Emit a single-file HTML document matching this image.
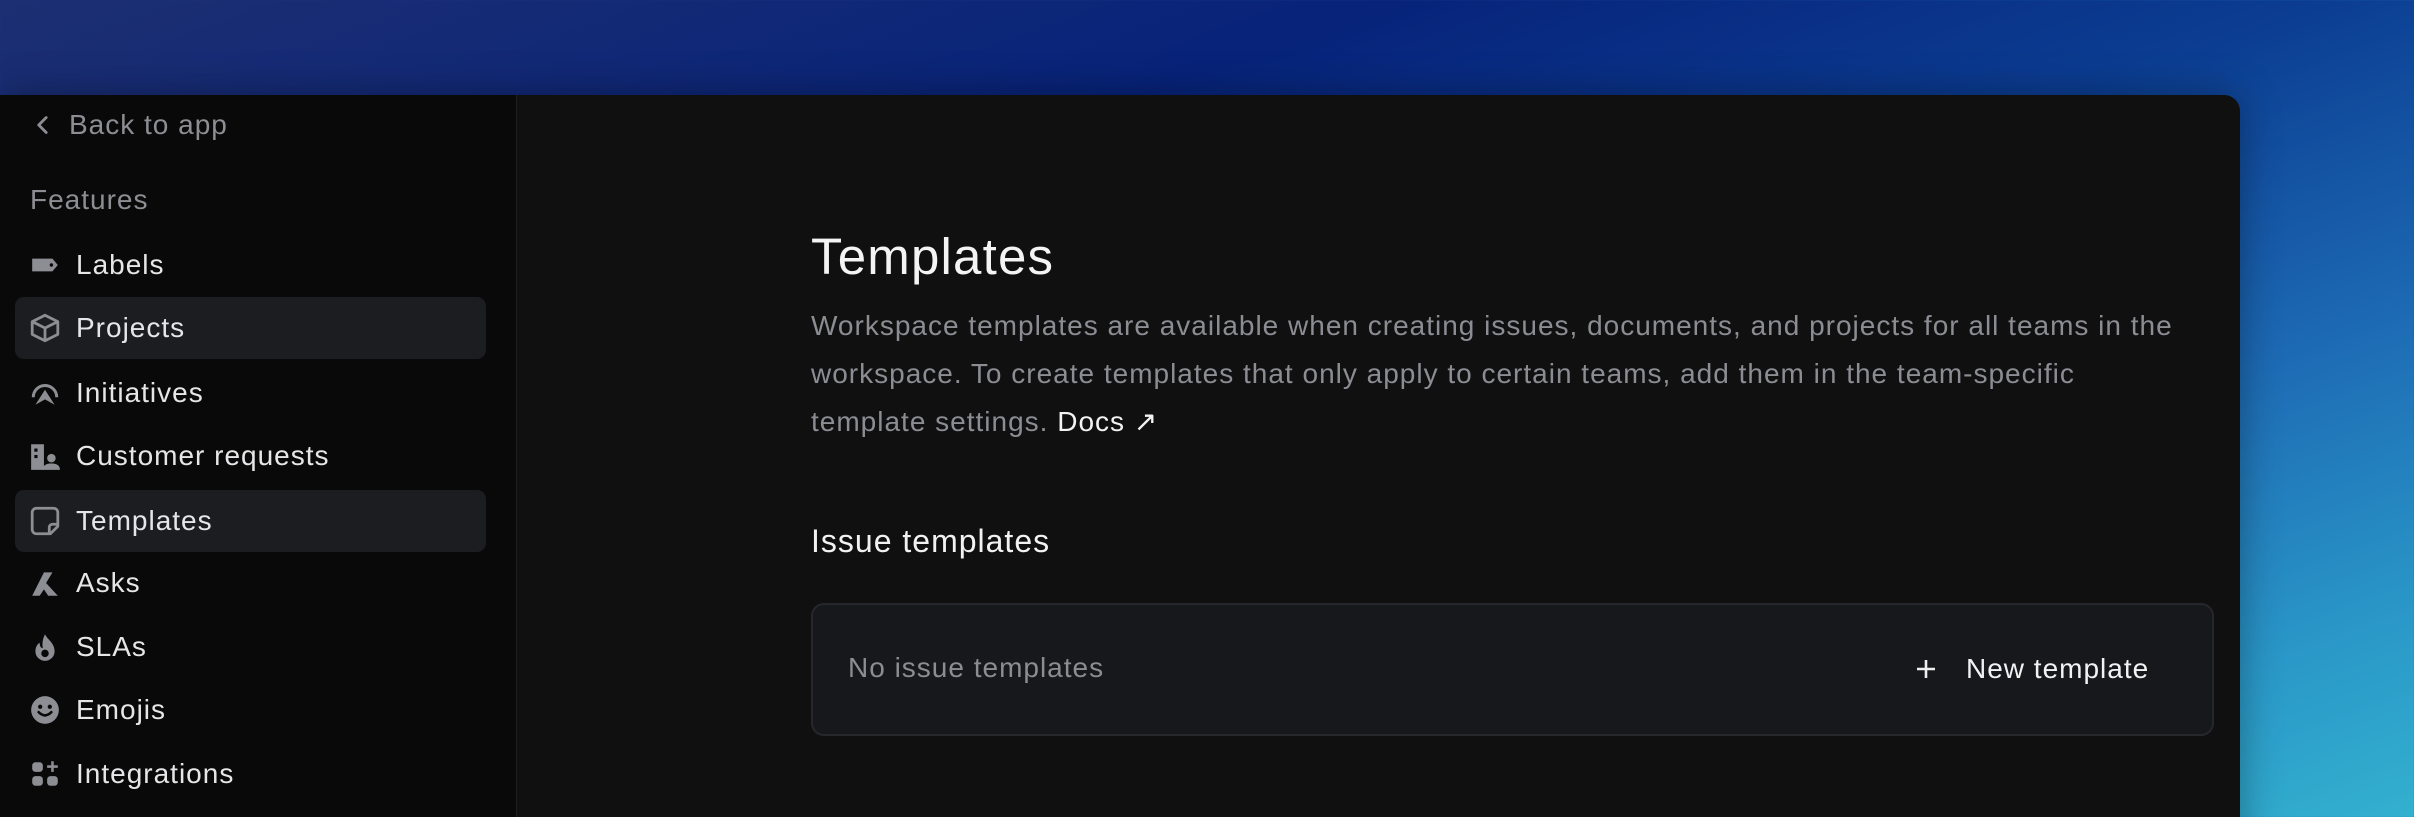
<!DOCTYPE html>
<html><head><meta charset="utf-8"><style>
*{margin:0;padding:0;box-sizing:border-box}
html,body{width:2414px;height:817px;overflow:hidden}
body{font-family:"Liberation Sans",sans-serif;background:linear-gradient(160deg,#1d2f72 0%,#07237a 30%,#0b3d92 50%,#1d6ab4 70%,#2a98c8 88%,#33b0cf 100%);position:relative;letter-spacing:1px}
.win{position:absolute;left:0;top:95px;width:2240px;height:760px;background:#101011;border-radius:0 16px 0 0;box-shadow:0 0 40px rgba(0,0,0,.35);overflow:hidden}
.side{position:absolute;left:0;top:0;width:517px;height:100%;background:#090909;border-right:1px solid #1e1f22}
.row{position:absolute;left:0;height:62px;display:flex;align-items:center;font-size:28px;color:#e6e6e8}
.row svg{position:absolute;left:29px;width:32px;height:32px}
.row span{position:absolute;left:76px;white-space:nowrap}
.hl{position:absolute;left:15px;width:471px;height:62px;background:#1c1d21;border-radius:9px}
.main{position:absolute;left:811px;top:0}
h1{position:absolute;top:132px;left:0;font-size:51px;font-weight:400;color:#f4f4f5;white-space:nowrap;letter-spacing:1.2px}
.p{position:absolute;top:207px;left:0;width:1385px;font-size:28px;line-height:48px;color:#8b8d93}
.p b{font-weight:400;color:#f2f2f3}
h2{position:absolute;top:428px;font-size:32px;font-weight:400;color:#f2f2f3;white-space:nowrap}
.box{position:absolute;left:811px;top:508px;width:1403px;height:133px;background:#17181b;border:2px solid #26272c;border-radius:13px}
</style></head><body>
<div class="win">
<div class="side">
 <div class="hl" style="top:202px"></div>
 <div class="hl" style="top:395px"></div>
 <div class="row" style="top:-1px;color:#8d8e93"><svg viewBox="0 0 30 30" style="left:27px"><path d="M18 8l-7 7 7 7" stroke="#8d8e93" stroke-width="2.6" fill="none" stroke-linecap="round" stroke-linejoin="round"/></svg><span style="left:69px">Back to app</span></div>
 <div class="row" style="top:74px;color:#8d8e93"><span style="left:30px">Features</span></div>
 <div class="row" style="top:139px"><svg viewBox="0 0 30 30"><path d="M3 9h19l5 6-5 6H3z" fill="#8d8e93"/><circle cx="21" cy="15" r="1.6" fill="#090909"/></svg><span>Labels</span></div>
 <div class="row" style="top:202px"><svg viewBox="0 0 30 30"><path d="M15 3l12 6v12l-12 6-12-6V9z M3 9l12 6 12-6 M15 15v12" stroke="#8d8e93" stroke-width="2.6" fill="none" stroke-linejoin="round"/></svg><span>Projects</span></div>
 <div class="row" style="top:267px"><svg viewBox="0 0 30 30"><path d="M4 19a11 11 0 1 1 22 0" stroke="#8d8e93" stroke-width="2.8" fill="none"/><path d="M15 12l9 14-9-5-9 5z" fill="#8d8e93"/></svg><span>Initiatives</span></div>
 <div class="row" style="top:330px"><svg viewBox="0 0 30 30"><path d="M2 4h12v24H2z" fill="#8d8e93"/><rect x="5" y="8" width="3" height="3" fill="#090909"/><rect x="5" y="14" width="3" height="3" fill="#090909"/><circle cx="21" cy="17" r="4" fill="#8d8e93"/><path d="M13 28c0-5 4-6 8-6s8 1 8 6z" fill="#8d8e93"/></svg><span>Customer requests</span></div>
 <div class="row" style="top:395px"><svg viewBox="0 0 30 30"><path d="M20 27H7a4 4 0 0 1-4-4V7a4 4 0 0 1 4-4h16a4 4 0 0 1 4 4v13z M27 18h-5a3 3 0 0 0-3 3v6" stroke="#8d8e93" stroke-width="2.6" fill="none" stroke-linejoin="round"/></svg><span>Templates</span></div>
 <div class="row" style="top:457px"><svg viewBox="0 0 30 30"><path d="M3 27L14 5l8 0-6 10 11 12H18l-4-6-4 6z" fill="#8d8e93"/></svg><span>Asks</span></div>
 <div class="row" style="top:521px"><svg viewBox="0 0 30 30"><path d="M15 3c2 5 9 8 9 16a9 9 0 0 1-18 0c0-4 2-7 4-8 0 3 1 5 3 5-1-4 0-9 2-13z" fill="#8d8e93"/><circle cx="15" cy="21" r="3.5" fill="#090909"/></svg><span>SLAs</span></div>
 <div class="row" style="top:584px"><svg viewBox="0 0 30 30"><circle cx="15" cy="15" r="13" fill="#8d8e93"/><circle cx="10.5" cy="12" r="2" fill="#090909"/><circle cx="19.5" cy="12" r="2" fill="#090909"/><path d="M9 17q6 6 12 0" stroke="#090909" stroke-width="2.4" fill="none" stroke-linecap="round"/></svg><span>Emojis</span></div>
 <div class="row" style="top:648px"><svg viewBox="0 0 30 30"><rect x="3" y="4" width="10" height="9" rx="3" fill="#8d8e93"/><rect x="3" y="17" width="10" height="9" rx="3" fill="#8d8e93"/><rect x="17" y="17" width="10" height="9" rx="3" fill="#8d8e93"/><path d="M22 3v10M17 8h10" stroke="#8d8e93" stroke-width="2.4"/></svg><span>Integrations</span></div>
</div>
<div class="main">
 <h1>Templates</h1>
 <div class="p">Workspace templates are available when creating issues, documents, and projects for all teams in the workspace. To create templates that only apply to certain teams, add them in the team-specific template settings. <b>Docs ↗</b></div>
 <h2>Issue templates</h2>
</div>
<div class="box">
 <div style="position:absolute;left:35px;top:47px;font-size:28px;color:#8b8d93">No issue templates</div>
 <svg style="position:absolute;left:1101px;top:52px" width="24" height="24" viewBox="0 0 24 24"><path d="M12 3v18M3 12h18" stroke="#eee" stroke-width="2.6"/></svg>
 <div style="position:absolute;left:1153px;top:48px;font-size:28px;color:#f2f2f3">New template</div>
</div>
</div>
</body></html>
